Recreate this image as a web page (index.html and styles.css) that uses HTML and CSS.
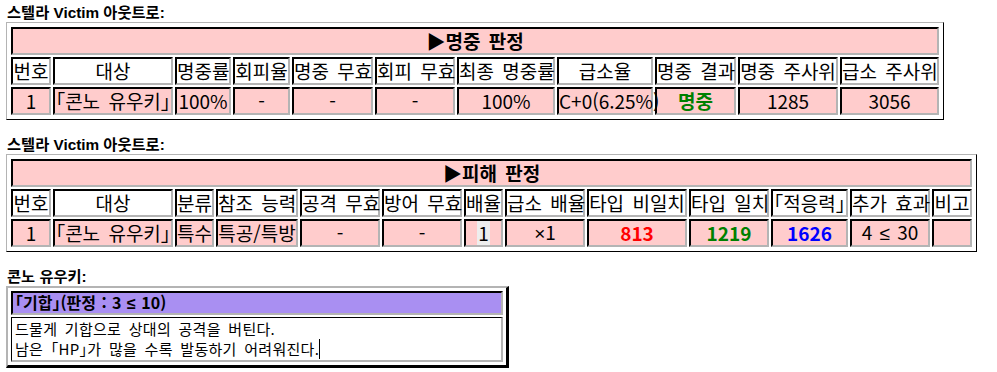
FILE: index.html
```html
<!DOCTYPE html>
<html lang="ko">
<head>
<meta charset="utf-8">
<title>Victim</title>
<link rel="stylesheet" href="styles.css">
</head>
<body>
<div class="page">
  <div class="label">스텔라 Victim 아웃트로:</div>
  <table class="calc hit">
    <colgroup>
      <col class="w40"><col class="w120"><col class="w56"><col class="w57"><col class="w81"><col class="w80"><col class="w98"><col class="w96"><col class="w81"><col class="w100"><col class="w99">
    </colgroup>
    <tr><th class="title" colspan="11">▶명중 판정</th></tr>
    <tr class="head">
      <td>번호</td><td>대상</td><td>명중률</td><td>회피율</td><td>명중 무효</td><td>회피 무효</td><td>최종 명중률</td><td>급소율</td><td>명중 결과</td><td>명중 주사위</td><td>급소 주사위</td>
    </tr>
    <tr class="data">
      <td>1</td><td>「콘노 유우키」</td><td>100%</td><td>-</td><td>-</td><td>-</td><td>100%</td><td>C+0(6.25%)</td><td><b class="green">명중</b></td><td>1285</td><td>3056</td>
    </tr>
  </table>

  <div class="label second">스텔라 Victim 아웃트로:</div>
  <table class="calc dmg">
    <colgroup>
      <col class="w40"><col class="w120"><col class="w39"><col class="w82"><col class="w80"><col class="w80"><col class="w39"><col class="w80"><col class="w100"><col class="w80"><col class="w77"><col class="w80"><col class="w40">
    </colgroup>
    <tr><th class="title" colspan="13">▶피해 판정</th></tr>
    <tr class="head">
      <td>번호</td><td>대상</td><td>분류</td><td>참조 능력</td><td>공격 무효</td><td>방어 무효</td><td>배율</td><td>급소 배율</td><td>타입 비일치</td><td>타입 일치</td><td>「적응력」</td><td>추가 효과</td><td>비고</td>
    </tr>
    <tr class="data">
      <td>1</td><td>「콘노 유우키」</td><td>특수</td><td>특공/특방</td><td>-</td><td>-</td><td><span class="mult">1</span></td><td><span class="sym">×</span>1</td><td><b class="red">813</b></td><td><b class="green">1219</b></td><td><b class="blue">1626</b></td><td>4 <span class="sym">≤</span> 30</td><td></td>
    </tr>
  </table>

  <div class="label second">콘노 유우키:</div>
  <table class="skill">
    <tr><td class="skill-head">「기합」(판정 : 3 <span class="sym">≤</span> 10)</td></tr>
    <tr><td class="skill-desc">드물게 기합으로 상대의 공격을 버틴다.<br>남은 「HP」가 많을 수록 발동하기 어려워진다.<span class="caret"></span></td></tr>
  </table>
</div>
</body>
</html>
```
FILE: styles.css
```css
body {
  margin: 0;
  background: #fff;
  color: #000;
  font-family: "Noto Sans CJK KR", sans-serif;
}

.page {
  padding: 4px 0 0 6px;
}

.label {
  font: bold 15.3px/17px "Liberation Sans", "Noto Sans CJK KR", sans-serif;
  padding-left: 1px;
  margin-bottom: 1px;
}

.label.second {
  margin-top: 16px;
}

.calc {
  box-sizing: border-box;
  table-layout: fixed;
  border-collapse: separate;
  border-spacing: 2px;
  padding: 2px;
  border: 1px solid;
  border-color: #b4b4b4 #000 #000 #b4b4b4;
  font-size: 19px;
  word-spacing: 3px;
  font-feature-settings: "halt";
}

.hit { width: 938px; }
.dmg { width: 971px; }

.w39 { width: 39px; }
.w40 { width: 40px; }
.w56 { width: 56px; }
.w57 { width: 57px; }
.w77 { width: 77px; }
.w80 { width: 80px; }
.w81 { width: 81px; }
.w82 { width: 82px; }
.w96 { width: 96px; }
.w98 { width: 98px; }
.w99 { width: 99px; }
.w100 { width: 100px; }
.w120 { width: 120px; }

.calc th,
.calc td {
  box-sizing: border-box;
  height: 28px;
  padding: 0;
  border: 2px solid;
  border-color: #000 #b4b4b4 #b4b4b4 #000;
  text-align: center;
  white-space: nowrap;
  overflow: visible;
  line-height: 22px;
  font-weight: normal;
}

.calc .title {
  background: #ffcccc;
  font-weight: bold;
}

.calc .head td {
  background: #fff;
}

.calc .data td {
  background: #ffcccc;
}

.green { color: #008000; font-weight: bold; }
.red { color: #ff0000; font-weight: bold; }
.blue { color: #0000ff; font-weight: bold; }

.sym {
  font-family: "Liberation Sans", sans-serif;
}

.mult {
  display: inline-block;
  background: #eeeeee;
  padding: 0 1px;
  line-height: 24px;
}

.skill {
  box-sizing: border-box;
  border-collapse: separate;
  border-spacing: 2px;
  padding: 1px;
  border-style: solid;
  border-width: 2px 3px 3px 2px;
  border-color: #b4b4b4 #000 #000 #b4b4b4;
  width: 503px;
}

.skill td {
  box-sizing: border-box;
  text-align: left;
  white-space: nowrap;
}

.skill-head {
  height: 23px;
  padding: 0 2px;
  background: #a98ff2;
  border: 2px solid;
  border-color: #000 #b4b4b4 #b4b4b4 #000;
  font-weight: bold;
  font-size: 16px;
  line-height: 18px;
  word-spacing: 1px;
  font-feature-settings: "halt";
}

.skill-desc {
  height: 45px;
  padding: 1px 3px;
  background: #fff;
  border-style: solid;
  border-width: 1px 2px 2px 1px;
  border-color: #000 #b4b4b4 #b4b4b4 #000;
  font-size: 15px;
  line-height: 20px;
  letter-spacing: 0.3px;
  word-spacing: 3px;
  font-feature-settings: "halt";
}

.caret {
  display: inline-block;
  width: 1px;
  height: 20px;
  background: #000;
  vertical-align: top;
}
```
